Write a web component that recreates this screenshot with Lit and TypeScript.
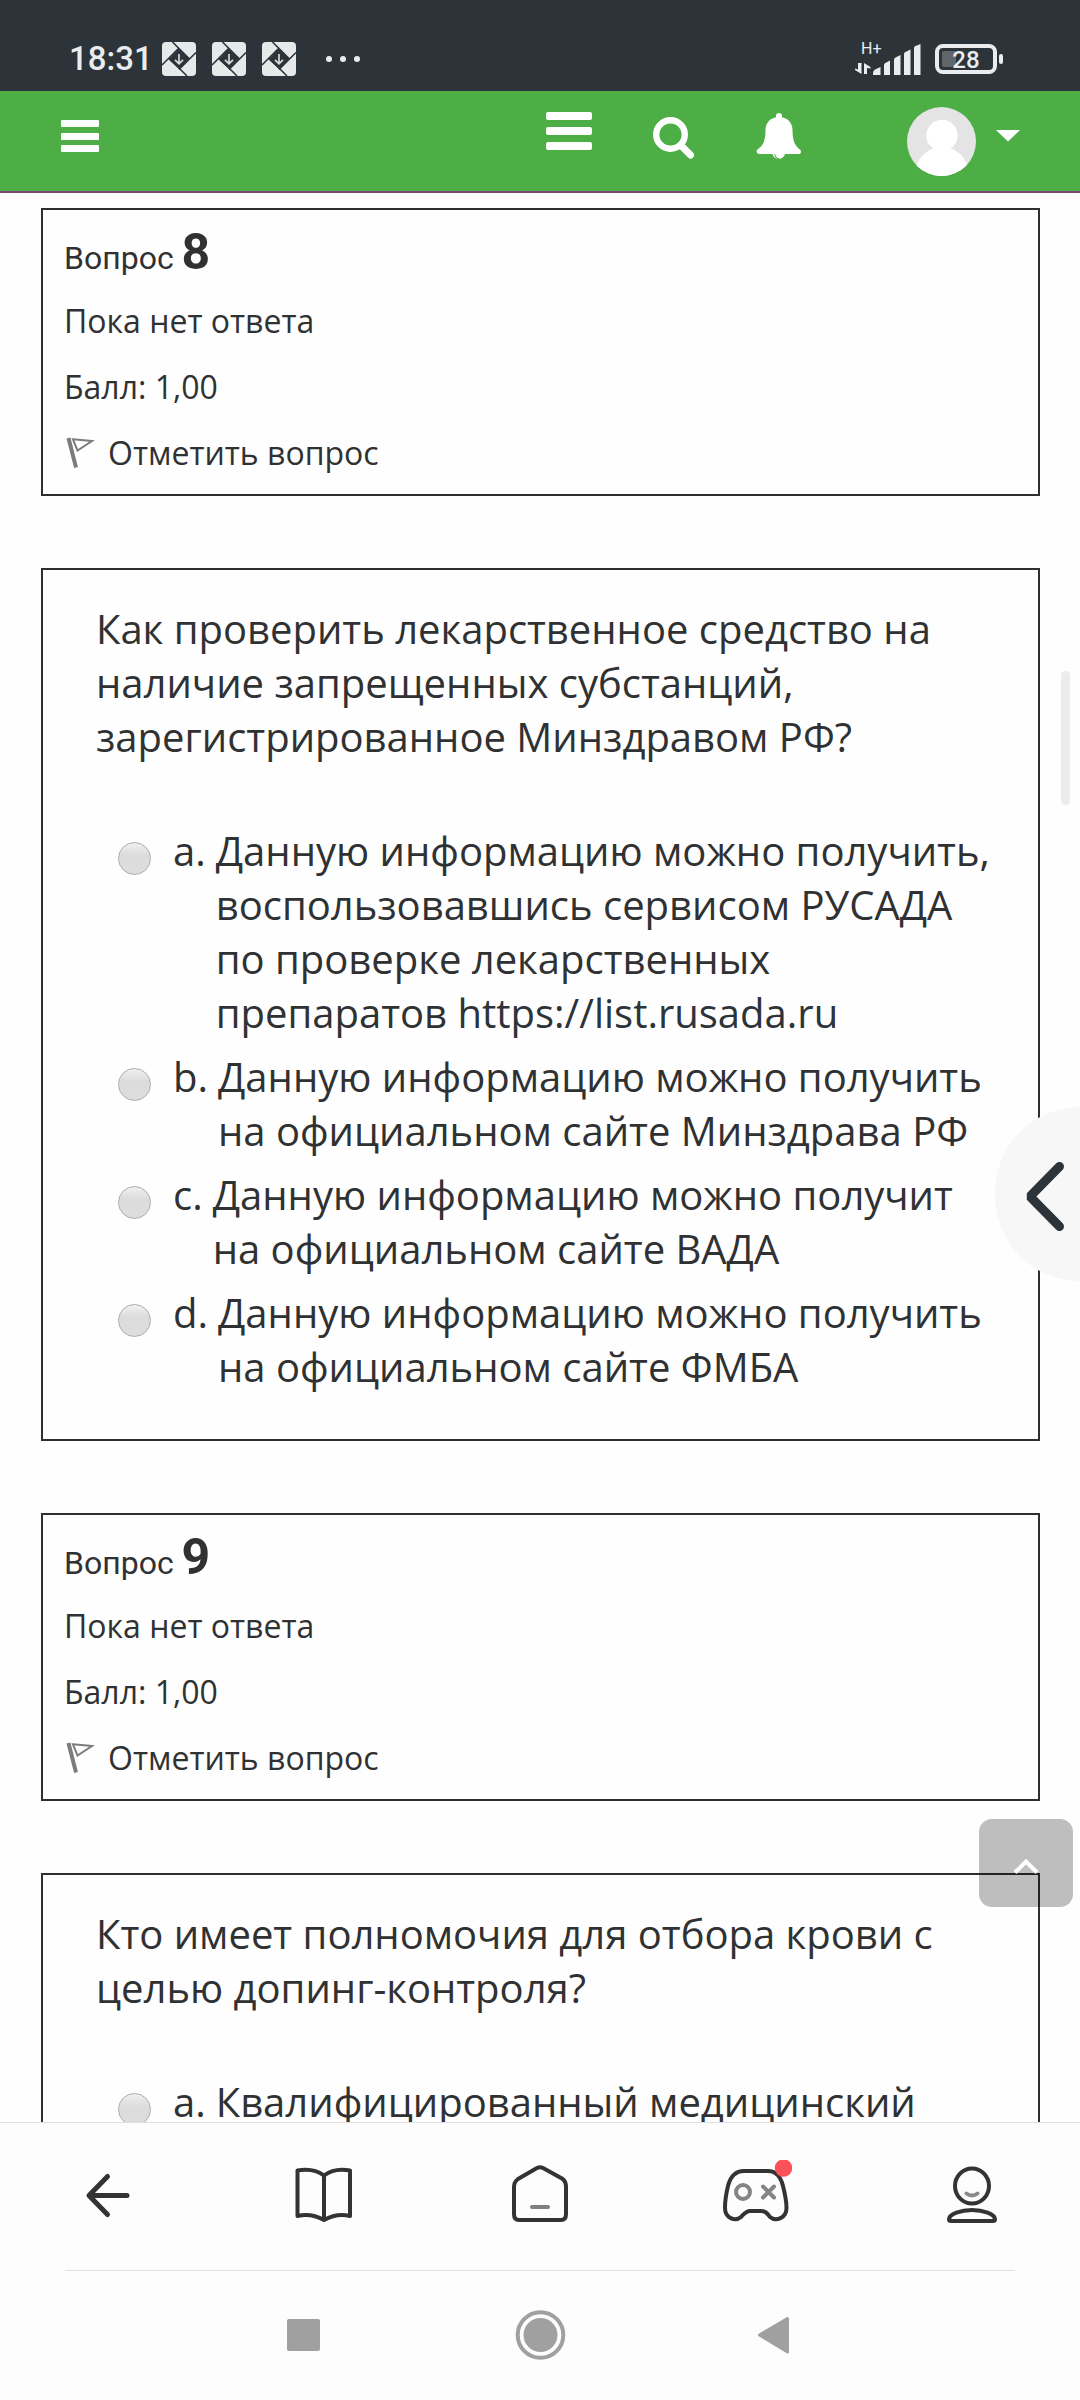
import { LitElement, html, css, svg } from "lit";
import { customElement, property } from "lit/decorators.js";

interface Answer {
  letter: string;
  text: string;
  link?: string;
}

interface Question {
  number: number;
  text: string;
  answers: Answer[];
}

const QUESTIONS: Question[] = [
  {
    number: 8,
    text: "Как проверить лекарственное средство на наличие запрещенных субстанций, зарегистрированное Минздравом РФ?",
    answers: [
      {
        letter: "a.",
        text: "Данную информацию можно получить, воспользовавшись сервисом РУСАДА по проверке лекарственных препаратов",
        link: "https://list.rusada.ru",
      },
      { letter: "b.", text: "Данную информацию можно получить на официальном сайте Минздрава РФ" },
      { letter: "c.", text: "Данную информацию можно получит на официальном сайте ВАДА" },
      { letter: "d.", text: "Данную информацию можно получить на официальном сайте ФМБА" },
    ],
  },
  {
    number: 9,
    text: "Кто имеет полномочия для отбора крови с целью допинг-контроля?",
    answers: [{ letter: "a.", text: "Квалифицированный медицинский" }],
  },
];

@customElement("status-bar")
export class StatusBar extends LitElement {
  static styles = css`
    :host {
      display: block;
      background: #2c343a;
      color: #e9edf0;
      font-family: Roboto, sans-serif;
    }
    .bar {
      display: flex;
      align-items: center;
      padding: 42px 77px 15px 69px;
      line-height: 34px;
    }
    .time {
      font-size: 33px;
      font-weight: 500;
      min-width: 85px;
      margin-right: 8px;
    }
    .notices {
      display: flex;
      gap: 16px;
    }
    .system {
      display: flex;
      gap: 14px;
      margin-left: auto;
    }
    svg {
      display: block;
      overflow: visible;
    }
    .network {
      font-size: 16px;
      fill: #e9edf0;
    }
    .charge {
      font-size: 24px;
      font-weight: 500;
      fill: #e9edf0;
    }
  `;

  private download() {
    return html`<svg width="34" height="34" viewBox="0 0 34 34" aria-hidden="true">
      <rect width="34" height="34" rx="4" fill="#e6e9ea" />
      <path d="M10.5 0L27.5 17M34 10.5L17 27.5M25 34L7 16M0 23L17 6" stroke="#2c343a" stroke-width="1.6" />
      <path d="M16.5 6.5L27.5 16.5L17.5 27.5L6.5 17.5Z" fill="#2c343a" />
      <path d="M17 12V21.5M13 17.8L17 21.8L21 17.8" fill="none" stroke="#d5dadd" stroke-width="1.7" />
    </svg>`;
  }

  render() {
    return html`<div class="bar">
      <span class="time">18:31</span>
      <div class="notices">
        ${this.download()}${this.download()}${this.download()}
        <svg width="48" height="34" viewBox="0 0 48 34" fill="#e9edf0" aria-hidden="true">
          <circle cx="17" cy="17" r="3" />
          <circle cx="31" cy="17" r="3" />
          <circle cx="45" cy="17" r="3" />
        </svg>
      </div>
      <div class="system">
        <svg width="66" height="34" viewBox="0 0 66 34" fill="#e9edf0">
          <text class="network" x="6" y="12">H+</text>
          <path d="M3 21H6.500V32L0 28V26.500L3 27.500ZM9 21L15.500 25V26.500L12 26V32H9Z" />
          <path d="M18 31.500Q18 28.500 20 27.500L25.500 25V33H18ZM29 23Q29 21.800 30 21.200L35 18.500V33H29ZM39 18Q39 16.500 40 15.800L45.500 13V33H39ZM49 12Q49 10.800 50 10.200L55.500 7.500V33H49ZM59 6Q59 4.800 60 4.200L65.500 2V33H59Z" />
        </svg>
        <svg width="68" height="34" viewBox="0 0 68 34">
          <rect x="2" y="4" width="58" height="26" rx="6" fill="none" stroke="#e9edf0" stroke-width="4" />
          <rect x="7" y="9" width="14" height="16" rx="2" fill="#60676c" />
          <rect x="64" y="12" width="4" height="10" rx="2" fill="#e9edf0" />
          <text class="charge" x="31" y="26" text-anchor="middle">28</text>
        </svg>
      </div>
    </div>`;
  }
}

@customElement("site-header")
export class SiteHeader extends LitElement {
  static styles = css`
    :host {
      display: block;
    }
    .bar {
      display: flex;
      gap: 61px;
      padding: 0 60px 0 61px;
      background: #4dae46;
      border-bottom: 2px solid #7a4672;
    }
    .push {
      margin-left: auto;
    }
    .icon {
      display: flex;
      gap: 20px;
      padding: 0;
      border: 0;
      background: none;
      cursor: pointer;
    }
    .user {
      margin-left: 44px;
    }
    svg {
      display: block;
      height: 100px;
    }
  `;

  render() {
    return html`<header class="bar">
      <button class="icon" aria-label="Боковая панель">
        <svg width="38" viewBox="0 0 38 100" fill="#fff">
          <rect y="29" width="38" height="7" rx="1" />
          <rect y="42" width="38" height="7" rx="1" />
          <rect y="54" width="38" height="7" rx="1" />
        </svg>
      </button>
      <button class="icon push" aria-label="Меню">
        <svg width="46" viewBox="0 0 46 100" fill="#fff">
          <rect y="21" width="46" height="8" rx="2" />
          <rect y="36" width="46" height="8" rx="2" />
          <rect y="51" width="46" height="8" rx="2" />
        </svg>
      </button>
      <button class="icon" aria-label="Поиск">
        <svg width="42" viewBox="0 0 42 100" fill="none" stroke="#fff">
          <circle cx="17.500" cy="43.500" r="14.300" stroke-width="6.400" />
          <path d="M28 54.500L37.500 64" stroke-width="7" stroke-linecap="round" />
        </svg>
      </button>
      <button class="icon" aria-label="Уведомления">
        <svg width="46" viewBox="0 0 46 100">
          <path fill="#fff" d="M23 22a3 3 0 0 1 3 3v1.200C33 27.500 36.500 33 36.500 39C36.500 50 39 55 44.500 59Q46 63 42 63H29A6.500 6.500 0 0 1 16.500 63H3Q-0.500 62 1 59C7 55 9.500 50 9.500 39C9.500 33 13 27.500 20 26.200V25a3 3 0 0 1 3-3Z" />
          <path fill="none" stroke="#4dae46" stroke-width="1" d="M18.500 63Q19 67 23 68" />
        </svg>
      </button>
      <button class="icon user" aria-label="Меню пользователя">
        <svg width="69" viewBox="0 0 69 100">
          <defs><clipPath id="face"><circle cx="34.500" cy="50.500" r="34.500" /></clipPath></defs>
          <g clip-path="url(#face)">
            <rect width="69" height="100" fill="#e4e4e4" />
            <ellipse cx="35" cy="83" rx="27" ry="27" fill="#fff" />
            <circle cx="35" cy="44.500" r="15.700" fill="#fff" />
            <path d="M10 75C18 87 52 87 60 75V90H10Z" fill="#fff" />
          </g>
        </svg>
        <svg width="24" viewBox="0 0 24 100"><path d="M0 39H24L12 50.500Z" fill="#fff" /></svg>
      </button>
    </header>`;
  }
}

@customElement("quiz-question")
export class QuizQuestion extends LitElement {
  @property({ attribute: false }) question!: Question;

  static styles = css`
    :host {
      display: flex;
      flex-direction: column;
      gap: 72px;
      color: #303132;
      font-family: "Open Sans", "Noto Sans", sans-serif;
    }
    .info,
    .body {
      border: 2px solid #2d3032;
    }
    .info {
      padding: 17px 21px 8px;
      font-size: 32px;
      line-height: 66px;
    }
    .title {
      margin: 0 0 1px;
      font: 400 32px/58px Roboto, sans-serif;
    }
    .number {
      font-size: 50px;
      font-weight: 700;
      line-height: 50px;
    }
    .line {
      margin: 0;
    }
    .flag {
      display: flex;
      align-items: center;
      gap: 8px;
      padding: 0;
      border: 0;
      background: none;
      color: inherit;
      font: inherit;
      cursor: pointer;
    }
    .body {
      padding: 32px 46px 45px 53px;
      font-size: 40px;
      line-height: 54px;
    }
    .text {
      margin: 0 0 60px;
    }
    .answers {
      display: flex;
      flex-direction: column;
      gap: 10px;
      padding-left: 22px;
    }
    .answer {
      display: flex;
      align-items: flex-start;
      gap: 22px;
    }
    .radio {
      appearance: none;
      flex: none;
      width: 33px;
      height: 33px;
      margin: 18px 0 0;
      border: 1px solid #acacac;
      border-radius: 50%;
      background: linear-gradient(#f0f0f0, #dcdcdc 40%, #dddddd);
    }
    .radio:checked {
      background: radial-gradient(#444 0 30%, #dddddd 34%);
    }
    .label {
      display: flex;
      gap: 10px;
    }
    .link {
      color: #2c343a;
      text-decoration: none;
    }
  `;

  render() {
    const q = this.question;
    return html`
      <section class="info">
        <h3 class="title">Вопрос <span class="number">${q.number}</span></h3>
        <p class="line">Пока нет ответа</p>
        <p class="line">Балл: 1,00</p>
        <button class="flag">
          <svg width="36" height="32" viewBox="0 0 36 32" fill="none" aria-hidden="true">
            <path d="M4.500 1L12 30.500" stroke="#7c7c7c" stroke-width="4" />
            <path d="M9 2.300L28 4L13.500 13.500Z" stroke="#7c7c7c" stroke-width="2" />
          </svg>
          Отметить вопрос
        </button>
      </section>
      <section class="body">
        <p class="text" id="text">${q.text}</p>
        <div class="answers" role="radiogroup" aria-labelledby="text">
          ${q.answers.map(
            (a, i) => html`<div class="answer">
              <input class="radio" type="radio" name="answer" id="answer-${i}" />
              <label class="label" for="answer-${i}">
                <span>${a.letter}</span>
                <span>${a.text}${a.link ? html` <a class="link" href=${a.link}>${a.link}</a>` : ""}</span>
              </label>
            </div>`,
          )}
        </div>
      </section>
    `;
  }
}

const TABS = [
  {
    name: "Назад",
    icon: svg`<path d="M55 35.500H17.500M35.500 16.500L17 35.500L35.500 54.500" stroke-width="5" />`,
  },
  {
    name: "Закладки",
    icon: svg`<path d="M36 15.500C28 9.500 18 9 9.500 10.500V56C18 54 28 55.500 36 60C44 55.500 54 54 62 56V10.500C54 9 44 9.500 36 15.500V60" />`,
  },
  {
    name: "Домой",
    icon: svg`<path d="M10 27Q10 22 14 19L33 8Q36 6.500 39 8L58 18.500Q62 21 62 27V54Q62 60 57 60H15Q10 60 10 54Z" /><path d="M28 47H44" stroke="#808080" />`,
  },
  {
    name: "Игры",
    icon: svg`<path d="M24 11H48C57 11 61 18 63 26C65 34 66.500 42 66.500 48C66.500 58 56 62 50 57C47 53.500 46 51 41 51H30C26 51 24.500 53.500 21 57C15 62 5 58 5 48C5 42 6 34 8 26C10 18 15 11 24 11Z" /><circle cx="23" cy="32" r="7" stroke="#848484" /><path d="M43 26.500L54 37.500M54 26.500L43 37.500" stroke="#848484" /><circle cx="63.500" cy="8" r="8.700" fill="#fa5257" stroke="none" />`,
  },
  {
    name: "Профиль",
    icon: svg`<ellipse cx="36" cy="26" rx="17" ry="17.500" /><path d="M30.500 33.500Q36 37.500 41.500 33.500" stroke="#8a8a8a" /><path d="M13 59.500C13 54 25 50 36 50C47 50 59 54 59 59.500Q59 61 57 61H15Q13 61 13 59.500Z" />`,
  },
];

@customElement("browser-nav")
export class BrowserNav extends LitElement {
  static styles = css`
    :host {
      display: block;
      background: #fdfdfd;
    }
    .tabs {
      display: grid;
      grid-template-columns: repeat(5, 1fr);
      padding: 37px 0 38px;
      border-top: 1px solid #dfdfdf;
    }
    .system {
      display: grid;
      grid-template-columns: repeat(3, 236px);
      justify-content: center;
      margin: 0 65px;
      padding: 36px 0 37px;
      border-top: 1px solid #e2e2e2;
    }
    .button {
      display: flex;
      justify-content: center;
      padding: 0;
      border: 0;
      background: none;
      cursor: pointer;
    }
    svg {
      display: block;
    }
  `;

  render() {
    return html`
      <nav class="tabs">
        ${TABS.map(
          (t) => html`<button class="button" aria-label=${t.name}>
            <svg width="72" height="72" viewBox="0 0 72 72" fill="none" stroke="#333" stroke-width="4" stroke-linecap="round" stroke-linejoin="round">
              ${t.icon}
            </svg>
          </button>`,
        )}
      </nav>
      <nav class="system">
        <button class="button" aria-label="Недавние">
          <svg width="56" height="56" viewBox="0 0 56 56"><rect x="11" y="12" width="33" height="32" rx="2" fill="#a0a0a0" /></svg>
        </button>
        <button class="button" aria-label="Главный экран">
          <svg width="56" height="56" viewBox="0 0 56 56">
            <circle cx="28.500" cy="28" r="22.800" fill="none" stroke="#a0a0a0" stroke-width="4" />
            <circle cx="28.500" cy="28" r="17" fill="#a0a0a0" />
          </svg>
        </button>
        <button class="button" aria-label="Вернуться">
          <svg width="56" height="56" viewBox="0 0 56 56"><path d="M11.500 28L39.500 11.500V45Z" fill="#a0a0a0" stroke="#a0a0a0" stroke-width="3" stroke-linejoin="round" /></svg>
        </button>
      </nav>
    `;
  }
}

@customElement("app-root")
export class AppRoot extends LitElement {
  static styles = css`
    :host {
      display: flex;
      flex-direction: column;
      height: 100vh;
      background: #fefefe;
    }
    .view {
      position: relative;
      flex: 1;
      min-height: 0;
      overflow: hidden;
    }
    .page {
      display: flex;
      flex-direction: column;
      gap: 72px;
      padding: 15px 40px 0 41px;
    }
    .thumb {
      position: absolute;
      top: 478px;
      right: 10px;
      width: 9px;
      height: 134px;
      border-radius: 5px;
      background: #ececec;
    }
    .drawer,
    .top {
      position: absolute;
      padding: 0;
      border: 0;
      cursor: pointer;
    }
    .drawer {
      top: 914px;
      right: 0;
      width: 85px;
      height: 174px;
      border-radius: 87px 0 0 87px;
      background: #f7f7f7;
    }
    .top {
      right: 7px;
      bottom: 215px;
      width: 94px;
      height: 88px;
      border-radius: 13px;
      background: rgba(0, 0, 0, 0.25);
    }
    svg {
      display: block;
      width: 100%;
      height: 100%;
    }
  `;

  render() {
    return html`
      <status-bar></status-bar>
      <site-header></site-header>
      <div class="view">
        <main class="page">
          ${QUESTIONS.map((q) => html`<quiz-question .question=${q}></quiz-question>`)}
        </main>
        <div class="thumb"></div>
        <button class="drawer" aria-label="Открыть блоки">
          <svg viewBox="0 0 85 174" fill="none"><path d="M64.500 59.500L35 89.500L64.500 119.500" stroke="#2c343a" stroke-width="9" stroke-linejoin="bevel" stroke-linecap="round" /></svg>
        </button>
        <button class="top" aria-label="Наверх">
          <svg viewBox="0 0 94 88" fill="none"><path d="M36 53.500L47 42.500L58 53.500" stroke="#fff" stroke-width="4" /></svg>
        </button>
      </div>
      <browser-nav></browser-nav>
    `;
  }
}
